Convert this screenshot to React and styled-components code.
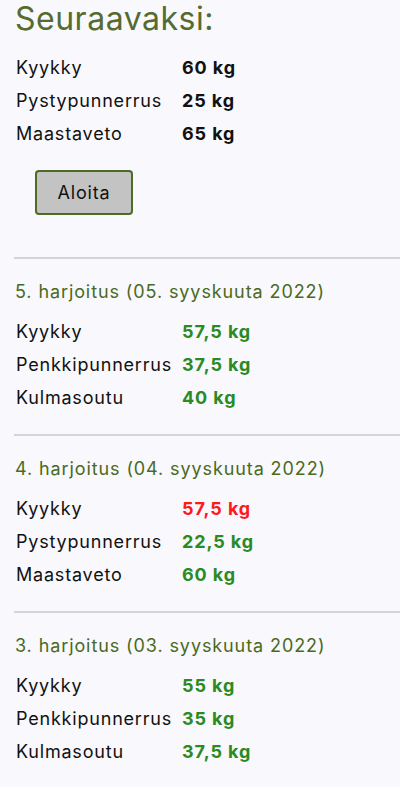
import React from 'react'
import styled, { createGlobalStyle } from 'styled-components'

const GlobalStyle = createGlobalStyle`
  html, body {
    margin: 0;
    padding: 0;
    background-color: #f8f8fd;
  }
  body {
    font-family: Inter, "Liberation Sans", sans-serif;
    color: #111;
  }
`

const NEXT = [
  { name: 'Kyykky', weight: '60 kg' },
  { name: 'Pystypunnerrus', weight: '25 kg' },
  { name: 'Maastaveto', weight: '65 kg' },
]

const HISTORY = [
  {
    title: '5. harjoitus (05. syyskuuta 2022)',
    lifts: [
      { name: 'Kyykky', weight: '57,5 kg' },
      { name: 'Penkkipunnerrus', weight: '37,5 kg' },
      { name: 'Kulmasoutu', weight: '40 kg' },
    ],
  },
  {
    title: '4. harjoitus (04. syyskuuta 2022)',
    lifts: [
      { name: 'Kyykky', weight: '57,5 kg', failed: true },
      { name: 'Pystypunnerrus', weight: '22,5 kg' },
      { name: 'Maastaveto', weight: '60 kg' },
    ],
  },
  {
    title: '3. harjoitus (03. syyskuuta 2022)',
    lifts: [
      { name: 'Kyykky', weight: '55 kg' },
      { name: 'Penkkipunnerrus', weight: '35 kg' },
      { name: 'Kulmasoutu', weight: '37,5 kg' },
    ],
  },
]

const LiftTable = ({ lifts, $history }) => (
  <Table>
    {lifts.map((lift) => (
      <React.Fragment key={lift.name}>
        <Name>{lift.name}</Name>
        <Weight $history={$history} $failed={lift.failed}>
          {lift.weight}
        </Weight>
      </React.Fragment>
    ))}
  </Table>
)

const App = () => {
  return (
    <Page>
      <GlobalStyle />
      <Next>
        <Title>Seuraavaksi:</Title>
        <LiftTable lifts={NEXT} />
        <StartButton type="button">Aloita</StartButton>
      </Next>
      {HISTORY.map((workout) => (
        <Workout key={workout.title}>
          <WorkoutTitle>{workout.title}</WorkoutTitle>
          <LiftTable lifts={workout.lifts} $history />
        </Workout>
      ))}
    </Page>
  )
}

const Page = styled.main`
  display: flex;
  flex-direction: column;
  width: 400px;
  min-height: 787px;
`

const Next = styled.section`
  display: flex;
  flex-direction: column;
  align-items: flex-start;
  padding: 2px 16px 42px;
`

const Title = styled.h1`
  margin: 0 0 15px -1px;
  font-size: 32px;
  line-height: 34px;
  font-weight: 400;
  letter-spacing: 0.5px;
  color: #556b2f;
`

const Table = styled.div`
  display: grid;
  grid-template-columns: 166px auto;
  grid-auto-rows: 33px;
  align-items: center;
  font-size: 18px;
  letter-spacing: 0.8px;
`

const Name = styled.span`
  color: #111;
`

const Weight = styled.span`
  font-weight: 700;
  letter-spacing: 0.9px;
  color: ${(props) =>
    props.$failed ? '#ff1a1a' : props.$history ? '#2b8a22' : '#111'};
`

const StartButton = styled.button`
  margin: 20px 0 0 19px;
  width: 98px;
  height: 45px;
  border: 2px solid #4f6a22;
  border-radius: 4px;
  background-color: #c3c3c3;
  font-family: inherit;
  font-size: 18px;
  letter-spacing: 0.8px;
  color: #111;
  cursor: pointer;
`

const Workout = styled.section`
  margin-left: 14px;
  padding: 21px 0 20px 2px;
  border-top: 2px solid #d4d4d6;

  & > div {
    margin-top: 11px;
  }
`

const WorkoutTitle = styled.h2`
  margin: 0 0 0 -1px;
  font-size: 18px;
  line-height: 24px;
  font-weight: 400;
  letter-spacing: 0.9px;
  color: #4a6a1e;
`

export default App
